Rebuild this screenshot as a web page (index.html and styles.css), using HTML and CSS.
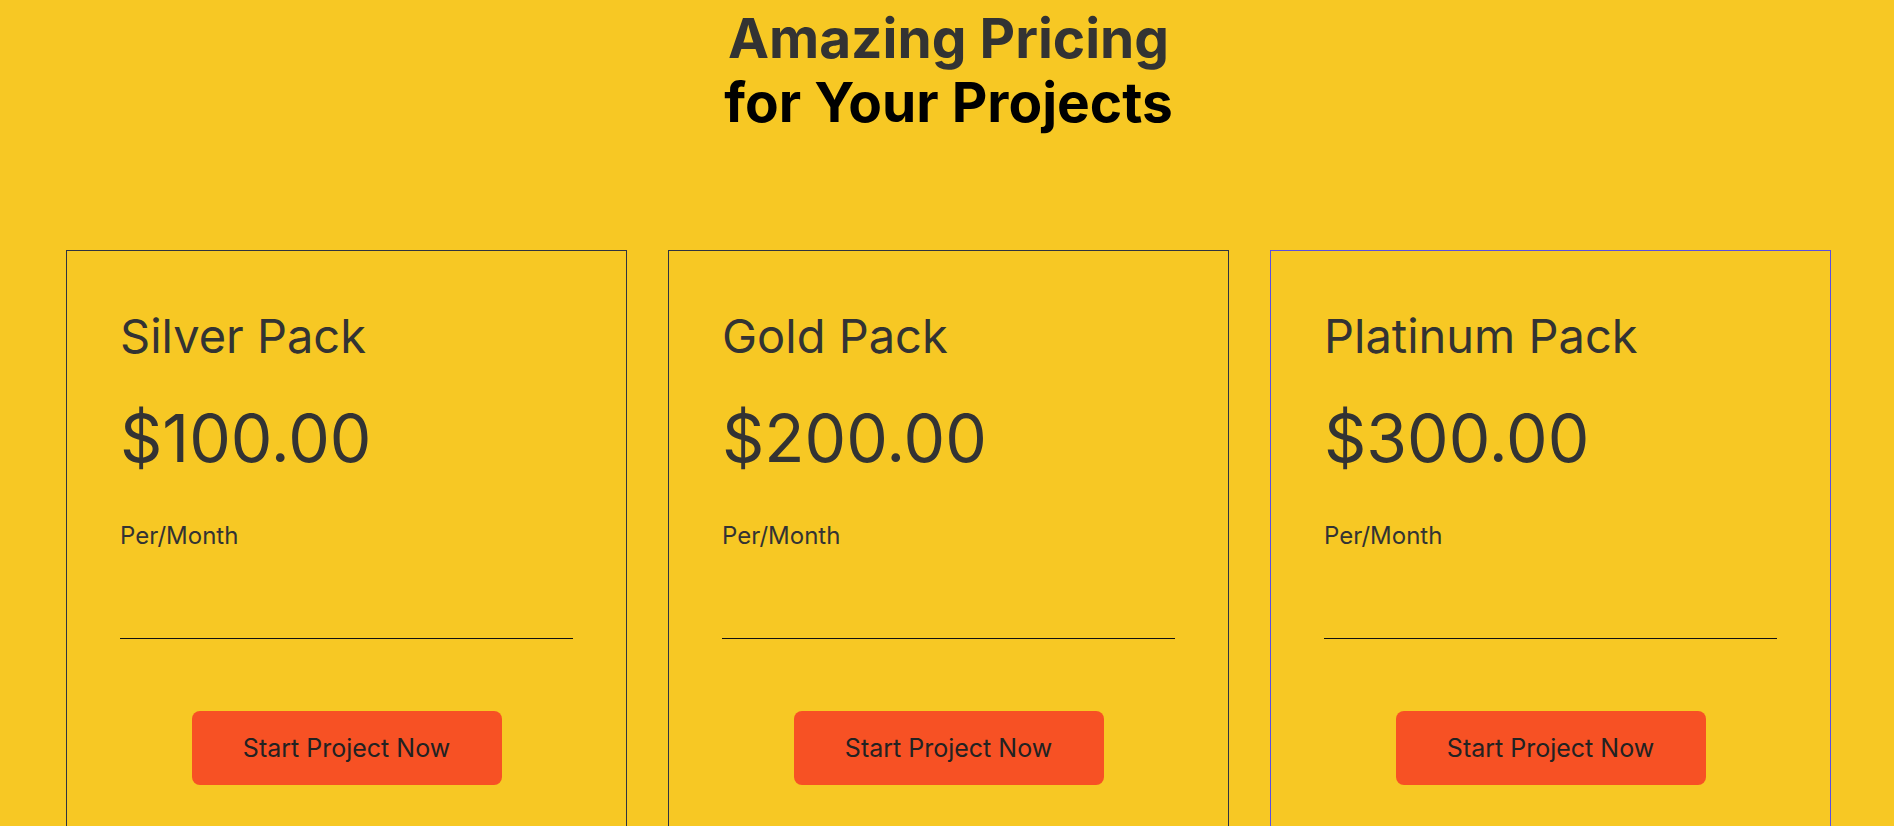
FILE: index.html
```html
<!DOCTYPE html>
<html lang="en">
<head>
    <meta charset="UTF-8">
    <meta name="viewport" content="width=device-width, initial-scale=1.0">
    <title>Amazing Pricing</title>
    <link rel="stylesheet" href="styles.css">
</head>
<body>
    <section class="pricing">
        <h2 class="pricing-title">
            <span class="title-top">Amazing Pricing</span>
            <span class="title-bottom">for Your Projects</span>
        </h2>

        <div class="plans">
            <div class="plan">
                <h3 class="plan-name">Silver Pack</h3>
                <p class="plan-price">$100.00</p>
                <p class="plan-period">Per/Month</p>
                <hr class="plan-divider">
                <div class="plan-action">
                    <button class="plan-btn">Start Project Now</button>
                </div>
            </div>

            <div class="plan">
                <h3 class="plan-name">Gold Pack</h3>
                <p class="plan-price">$200.00</p>
                <p class="plan-period">Per/Month</p>
                <hr class="plan-divider">
                <div class="plan-action">
                    <button class="plan-btn">Start Project Now</button>
                </div>
            </div>

            <div class="plan plan-active">
                <h3 class="plan-name">Platinum Pack</h3>
                <p class="plan-price">$300.00</p>
                <p class="plan-period">Per/Month</p>
                <hr class="plan-divider">
                <div class="plan-action">
                    <button class="plan-btn">Start Project Now</button>
                </div>
            </div>
        </div>
    </section>
</body>
</html>
```

FILE: styles.css
```css
body {
    margin: 0;
    background-color: #f7c824;
    font-family: Inter, "Noto Sans", sans-serif;
    color: #333;
}
.pricing {
    padding: 6px 63px 0 66px;
}
.pricing-title {
    margin: 0 0 116px;
    text-align: center;
    font-size: 55px;
    line-height: 64px;
    font-weight: 700;
}
.pricing-title span {
    display: block;
}
.title-top {
    color: #333;
}
.title-bottom {
    color: #000;
}
.plans {
    display: grid;
    grid-template-columns: repeat(3, 1fr);
    gap: 41px;
}
.plan {
    border: 1px solid #2f3340;
    padding: 0 53px 60px;
    height: 620px;
}
.plan-active {
    border-color: #5b4fe0;
}
.plan-name {
    margin: 57px 0 0;
    font-size: 47px;
    line-height: 56px;
    font-weight: 400;
}
.plan-price {
    margin: 34px 0 0;
    font-size: 66px;
    line-height: 80px;
    font-weight: 400;
}
.plan-period {
    margin: 43px 0 0;
    font-size: 24px;
    line-height: 30px;
}
.plan-divider {
    margin: 87px 0 0;
    border: none;
    border-top: 1px solid #111;
}
.plan-action {
    display: flex;
    justify-content: center;
    margin-top: 72px;
}
.plan-btn {
    width: 310px;
    height: 74px;
    background-color: #f75124;
    color: #222;
    border: none;
    border-radius: 8px;
    font-family: inherit;
    font-size: 25px;
    cursor: pointer;
}
```
